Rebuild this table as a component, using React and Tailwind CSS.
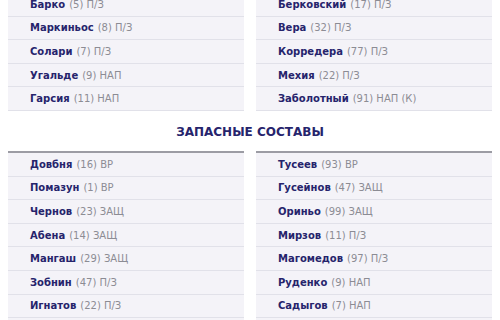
import React from "react";

const topLeft = [
  ["Барко", "(5) П/З"],
  ["Маркиньос", "(8) П/З"],
  ["Солари", "(7) П/З"],
  ["Угальде", "(9) НАП"],
  ["Гарсия", "(11) НАП"],
];
const topRight = [
  ["Берковский", "(17) П/З"],
  ["Вера", "(32) П/З"],
  ["Корредера", "(77) П/З"],
  ["Мехия", "(22) П/З"],
  ["Заболотный", "(91) НАП (К)"],
];
const botLeft = [
  ["Довбня", "(16) ВР"],
  ["Помазун", "(1) ВР"],
  ["Чернов", "(23) ЗАЩ"],
  ["Абена", "(14) ЗАЩ"],
  ["Мангаш", "(29) ЗАЩ"],
  ["Зобнин", "(47) П/З"],
  ["Игнатов", "(22) П/З"],
  ["", ""],
];
const botRight = [
  ["Тусеев", "(93) ВР"],
  ["Гусейнов", "(47) ЗАЩ"],
  ["Ориньо", "(99) ЗАЩ"],
  ["Мирзов", "(11) П/З"],
  ["Магомедов", "(97) П/З"],
  ["Руденко", "(9) НАП"],
  ["Садыгов", "(7) НАП"],
  ["", ""],
];

function Row({ name, info }) {
  return (
    <div className="h-[23.6px] border-b border-[#e1e1e9] bg-[#f4f3f8] pl-[22px] flex items-center pt-[1px] text-[10px] leading-none whitespace-nowrap">
      <span className="font-bold text-[#26246c]">{name}</span>
      {info && <span className="ml-[4px] text-[#8c8c94]">{info}</span>}
    </div>
  );
}

function Col({ rows, thick }) {
  return (
    <div className={thick ? "border-t-2 border-[#9c9ca4]" : ""}>
      {rows.map((r, i) => (
        <Row key={i} name={r[0]} info={r[1]} />
      ))}
    </div>
  );
}

export default function App() {
  return (
    <div
      className="w-[500px] h-[320px] overflow-hidden bg-white px-2"
      style={{ fontFamily: "'DejaVu Sans', 'Noto Sans', sans-serif" }}
    >
      <div className="grid grid-cols-2 gap-x-3 -mt-[7px]">
        <Col rows={topLeft} />
        <Col rows={topRight} />
      </div>
      <div className="h-[40px] flex items-center justify-center pt-[3px] text-[12px] font-bold text-[#26246c]">
        ЗАПАСНЫЕ СОСТАВЫ
      </div>
      <div className="grid grid-cols-2 gap-x-3">
        <Col rows={botLeft} thick />
        <Col rows={botRight} thick />
      </div>
    </div>
  );
}
